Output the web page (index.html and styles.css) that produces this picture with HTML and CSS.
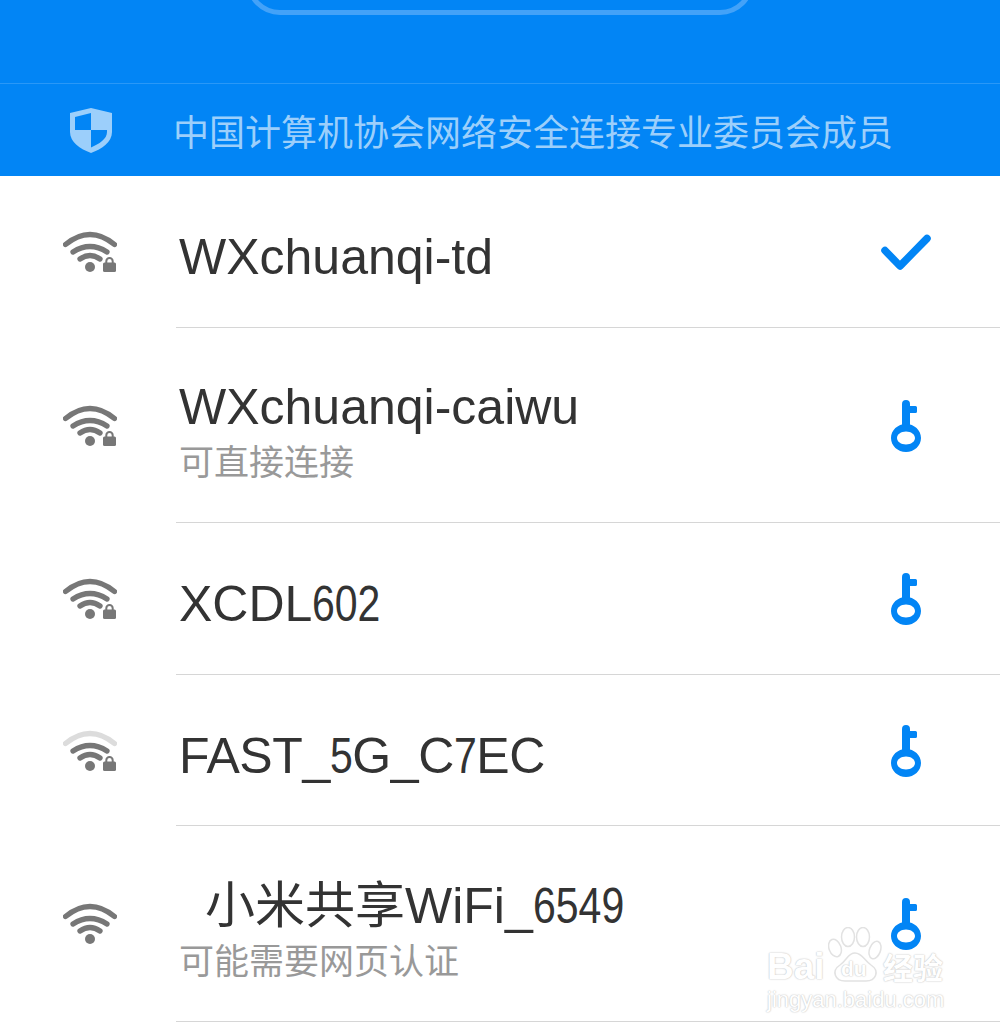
FILE: index.html
```html
<!DOCTYPE html>
<html lang="zh">
<head>
<meta charset="utf-8">
<title>WLAN</title>
<link rel="stylesheet" href="styles.css">
</head>
<body>
<svg class="defs" width="0" height="0" aria-hidden="true">
  <defs>
    <symbol id="key" viewBox="0 0 30 52">
      <path d="M11 4a4 4 0 0 1 8 0V6H24.500a1.500 1.500 0 0 1 1.500 1.500V11.500a1.500 1.500 0 0 1 -1.500 1.500H19V26H11Z" fill="#0285f5"/>
      <path fill-rule="evenodd" d="M15 24C23.300 24 30 30.300 30 38S23.300 52 15 52 0 45.700 0 38 6.700 24 15 24ZM15 31.500C10 31.500 6 34.400 6 38S10 44.500 15 44.500 24 41.600 24 38 20 31.500 15 31.500Z" fill="#0285f5"/>
    </symbol>
    <symbol id="lock" viewBox="0 0 13 15">
      <path d="M3.300 7V4.300a3.200 3.200 0 0 1 6.400 0V7" fill="none" stroke="#777" stroke-width="2"/>
      <rect x="0" y="5.500" width="13" height="9.500" rx="1.500" fill="#777"/>
    </symbol>
    <symbol id="wifi-dot" viewBox="0 0 54 42">
      <path d="M17 28Q27 21 37 28" fill="none" stroke="#777" stroke-width="5.300" stroke-linecap="round"/>
      <path d="M10 21Q27 10 44 21" fill="none" stroke="#777" stroke-width="5.300" stroke-linecap="round"/>
      <circle cx="27" cy="36" r="5" fill="#777"/>
    </symbol>
  </defs>
</svg>
<header class="banner">
  <div class="banner-top"><div class="pill"></div></div>
  <div class="notice">
    <svg class="shield" viewBox="0 0 42 45" aria-hidden="true">
      <path d="M21 0 42 5V24C42 34 32 41 21 45 10 41 0 34 0 24V5Z" fill="#9ccffb"/>
      <path d="M21 5 5 9V22H21ZM21 22V39.500C29 36 37 31 37 24V22Z" fill="#0285f5"/>
    </svg>
    <span class="notice-text">中国计算机协会网络安全连接专业委员会成员</span>
  </div>
</header>
<main class="list">
  <div class="row row-short row-plus">
    <div class="signal">
      <svg class="wifi" viewBox="0 0 54 42" aria-hidden="true">
        <path class="arc" d="M2.500 13.500Q27 -6.500 51.500 13.500"/>
        <use href="#wifi-dot" width="54" height="42"/>
        <use href="#lock" x="40" y="26" width="13" height="15"/>
      </svg>
    </div>
    <div class="info"><div class="name">WXchuanqi-td</div></div>
    <svg class="check" viewBox="0 0 50 37" aria-hidden="true"><path d="M4 16.500 19 32 46 4.500" fill="none" stroke="#0285f5" stroke-width="7.500" stroke-linecap="round" stroke-linejoin="round"/></svg>
  </div>
  <div class="row row-tall">
    <div class="signal">
      <svg class="wifi" viewBox="0 0 54 42" aria-hidden="true">
        <path class="arc" d="M2.500 13.500Q27 -6.500 51.500 13.500"/>
        <use href="#wifi-dot" width="54" height="42"/>
        <use href="#lock" x="40" y="26" width="13" height="15"/>
      </svg>
    </div>
    <div class="info"><div class="name">WXchuanqi-caiwu</div><div class="sub">可直接连接</div></div>
    <svg class="key"><use href="#key"/></svg>
  </div>
  <div class="row row-short row-plus">
    <div class="signal">
      <svg class="wifi" viewBox="0 0 54 42" aria-hidden="true">
        <path class="arc" d="M2.500 13.500Q27 -6.500 51.500 13.500"/>
        <use href="#wifi-dot" width="54" height="42"/>
        <use href="#lock" x="40" y="26" width="13" height="15"/>
      </svg>
    </div>
    <div class="info"><div class="name">XCDL<span class="num num-3">602</span></div></div>
    <svg class="key"><use href="#key"/></svg>
  </div>
  <div class="row row-short">
    <div class="signal">
      <svg class="wifi" viewBox="0 0 54 42" aria-hidden="true">
        <path class="arc arc-weak" d="M2.500 13.500Q27 -6.500 51.500 13.500"/>
        <use href="#wifi-dot" width="54" height="42"/>
        <use href="#lock" x="40" y="26" width="13" height="15"/>
      </svg>
    </div>
    <div class="info"><div class="name name-tight">FAST_<span class="num num-1">5</span>G_C<span class="num num-1">7</span>EC</div></div>
    <svg class="key"><use href="#key"/></svg>
  </div>
  <div class="row row-tall row-plus">
    <div class="signal">
      <svg class="wifi" viewBox="0 0 54 42" aria-hidden="true">
        <path class="arc" d="M2.500 13.500Q27 -6.500 51.500 13.500"/>
        <use href="#wifi-dot" width="54" height="42"/>
      </svg>
    </div>
    <div class="info"><div class="name name-cjk">小米共享WiFi_<span class="num num-4">6549</span></div><div class="sub">可能需要网页认证</div></div>
    <svg class="key"><use href="#key"/></svg>
  </div>
</main>
<div class="watermark">
  <svg class="paw" viewBox="0 0 54 55" aria-hidden="true">
    <g fill="#fff" stroke="#e2e2e2" stroke-width="1.500">
      <ellipse cx="7" cy="21" rx="6" ry="9" transform="rotate(-20 7 21)"/>
      <ellipse cx="20" cy="10" rx="6.500" ry="9.500"/>
      <ellipse cx="35" cy="10" rx="6.500" ry="9.500"/>
      <ellipse cx="47" cy="23" rx="5.500" ry="9" transform="rotate(20 47 23)"/>
      <path d="M27 26C20 26 19 33 12 38 3 44 7 54 17 54H38C48 54 52 44 43 38 36 33 34 26 27 26Z"/>
    </g>
  </svg>
  <div class="wm-bai">Bai</div>
  <div class="wm-du">du</div>
  <div class="wm-cn">经验</div>
  <div class="wm-url">jingyan.baidu.com</div>
</div>
</body>
</html>
```
FILE: styles.css
```css
* { box-sizing: border-box; }
html, body { margin: 0; padding: 0; }
body {
  width: 1000px;
  height: 1033px;
  overflow: hidden;
  position: relative;
  background: #fff;
  font-family: "Liberation Sans", "Noto Sans CJK SC", sans-serif;
}
.defs { position: absolute; }
.banner { background: #0285f5; height: 176px; display: flex; flex-direction: column; }
.banner-top {
  height: 84px;
  border-bottom: 1px solid #2a98f7;
  display: flex;
  justify-content: center;
}
.pill {
  width: 508px;
  height: 68px;
  margin-top: -53px;
  border: 5px solid #43a2f8;
  border-radius: 34px;
}
.notice { flex: 1; display: flex; align-items: center; padding-left: 70px; }
.shield { width: 42px; height: 45px; flex: none; }
.notice-text {
  margin-left: 61px;
  font-size: 36px;
  font-weight: 400;
  color: #9ccffb;
  font-family: "Noto Sans CJK SC", sans-serif;
  white-space: nowrap;
}
.list { display: flex; flex-direction: column; }
.row { display: flex; align-items: center; position: relative; }
.row::after {
  content: "";
  position: absolute;
  left: 176px;
  right: 0;
  bottom: 0;
  height: 1px;
  background: #d6d6d6;
}
.row-short { height: 151px; }
.row-tall { height: 195px; }
.row-plus.row-short { height: 152px; }
.row-plus.row-tall { height: 196px; }
.signal { width: 176px; padding-left: 63px; flex: none; display: flex; }
.wifi { width: 54px; height: 42px; }
.arc { fill: none; stroke: #777; stroke-width: 5.300; stroke-linecap: round; }
.arc-weak { stroke: #dcdcdc; }
.info { flex: 1; padding-left: 3px; padding-top: 8px; }
.row-short .info { padding-top: 10px; }
.name { font-size: 50px; line-height: 60px; color: #333; white-space: nowrap; }
.name-tight { letter-spacing: -0.4px; }
.name-cjk { padding-left: 26px; }
.num { display: inline-block; transform: scaleX(0.82); transform-origin: 0 50%; }
.num-1 { margin-right: -5px; }
.num-3 { margin-right: -15px; }
.num-4 { margin-right: -20px; }
.sub {
  font-size: 35px;
  line-height: 44px;
  padding-top: 1px;
  color: #999;
  font-family: "Noto Sans CJK SC", sans-serif;
  font-weight: 400;
}
.check { width: 50px; height: 37px; margin-right: 69px; flex: none; }
.key { width: 30px; height: 52px; margin-right: 79px; flex: none; }
.watermark {
  position: absolute;
  left: 767px;
  top: 925px;
  width: 180px;
  height: 90px;
  color: #fff;
  font-weight: 700;
  white-space: nowrap;
  text-shadow: 0 0 1px #c8c8c8, 0 0 2px #c8c8c8;
}
.paw { position: absolute; left: 61px; top: 2px; width: 54px; height: 55px; }
.wm-bai { position: absolute; left: 0; top: 22px; font-size: 37px; line-height: 40px; }
.wm-du { position: absolute; left: 74px; top: 32px; font-size: 21px; line-height: 24px; }
.wm-cn { position: absolute; left: 116px; top: 20px; font-size: 30px; line-height: 42px; font-family: "Noto Sans CJK SC", sans-serif; }
.wm-url { position: absolute; left: 0; top: 62px; font-size: 22px; line-height: 26px; font-weight: 400; }
```
